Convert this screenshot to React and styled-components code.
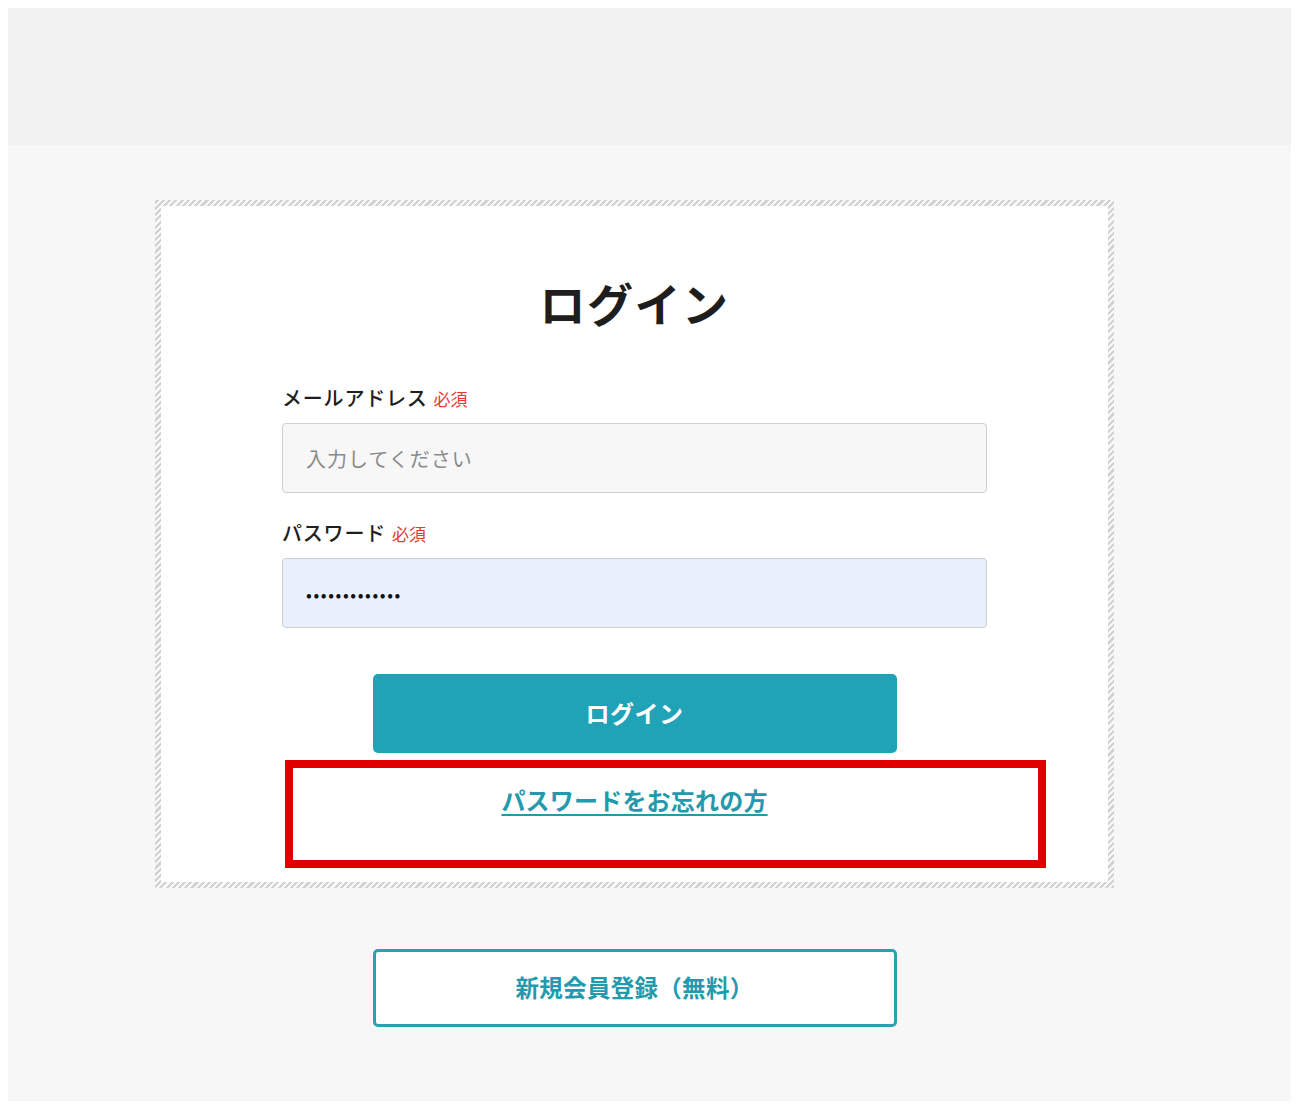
import styled, { createGlobalStyle } from "styled-components";

const Global = createGlobalStyle`
  body {
    margin: 8px;
    background: #fff;
    font-family: "Noto Sans CJK JP", "Noto Sans", sans-serif;
    color: #222;
  }
  * { box-sizing: border-box; }
`;

const Header = styled.header`
  height: 137px;
  background: #f2f2f2;
`;

const Main = styled.main`
  background: #f7f7f7;
  padding: 55px 30px 74px 0;
  display: flex;
  flex-direction: column;
  align-items: center;
`;

const Card = styled.section`
  position: relative;
  width: 959px;
  padding: 6px;
  background: repeating-linear-gradient(
    -45deg,
    #d2d2d2 0 2.2px,
    #f8f8f8 2.2px 4.4px
  );
`;

const CardInner = styled.div`
  background: #fff;
  padding: 70px 121px 62px;
  display: flex;
  flex-direction: column;
`;

const Title = styled.h1`
  margin: 0 0 54px;
  text-align: center;
  font-size: 46px;
  line-height: 53px;
  font-weight: 700;
  color: #1e1e1e;
  letter-spacing: 1.5px;
`;

const Field = styled.div`
  display: flex;
  flex-direction: column;
  gap: 9px;
  margin-bottom: ${(p) => p.$mb || 0}px;
`;

const Label = styled.label`
  font-size: 20px;
  line-height: 30px;
  font-weight: 500;
  color: #1e1e1e;
  display: flex;
  align-items: baseline;
  gap: 6px;
  letter-spacing: 0.8px;
`;

const Required = styled.span`
  color: #e53935;
  font-size: 17px;
  font-weight: 400;
  letter-spacing: 0;
`;

const Input = styled.input`
  width: 100%;
  height: 70px;
  border: 1px solid #cfcfcf;
  border-radius: 4px;
  background: ${(p) => p.$bg || "#f7f7f7"};
  padding: 0 23px;
  font-family: inherit;
  font-size: ${(p) => (p.type === "password" ? "17px" : "20px")};
  letter-spacing: ${(p) => (p.type === "password" ? "1.6px" : "1px")};
  color: #111;
  outline: none;
  &::placeholder {
    color: #8a8a8a;
  }
`;

const PrimaryButton = styled.button`
  align-self: center;
  width: 524px;
  height: 79px;
  margin-top: 46px;
  padding-bottom: 4px;
  border: none;
  border-radius: 5px;
  background: #20a2b7;
  color: #fff;
  font-family: inherit;
  font-size: 24px;
  font-weight: 700;
  letter-spacing: 0.5px;
  cursor: pointer;
`;

const LinkRow = styled.div`
  margin-top: 30px;
  text-align: center;
  line-height: 33px;
`;

const ForgotLink = styled.a`
  color: #2399ac;
  font-size: 24px;
  font-weight: 700;
  letter-spacing: 0.2px;
  text-decoration: underline;
  text-underline-offset: 4px;
  text-decoration-thickness: 2px;
`;

const Highlight = styled.div`
  position: absolute;
  left: 130px;
  top: 560px;
  width: 761px;
  height: 108px;
  border: 8px solid #e00000;
  pointer-events: none;
`;

const OutlineButton = styled.button`
  margin-top: 61px;
  width: 524px;
  height: 78px;
  padding-bottom: 4px;
  border: 3px solid #2aa0b3;
  border-radius: 5px;
  background: #fff;
  color: #2399ac;
  font-family: inherit;
  font-size: 23.5px;
  font-weight: 700;
  letter-spacing: 0.3px;
  cursor: pointer;
`;

export default function App() {
  return (
    <>
      <Global />
      <Header />
      <Main>
        <Card>
          <CardInner>
            <Title>ログイン</Title>
            <Field $mb={25}>
              <Label>
                メールアドレス<Required>必須</Required>
              </Label>
              <Input type="email" placeholder="入力してください" />
            </Field>
            <Field>
              <Label>
                パスワード<Required>必須</Required>
              </Label>
              <Input type="password" $bg="#e8f0fe" defaultValue="abcdefghijklm" readOnly />
            </Field>
            <PrimaryButton>ログイン</PrimaryButton>
            <LinkRow>
              <ForgotLink href="#">パスワードをお忘れの方</ForgotLink>
            </LinkRow>
          </CardInner>
          <Highlight />
        </Card>
        <OutlineButton>新規会員登録（無料）</OutlineButton>
      </Main>
    </>
  );
}
